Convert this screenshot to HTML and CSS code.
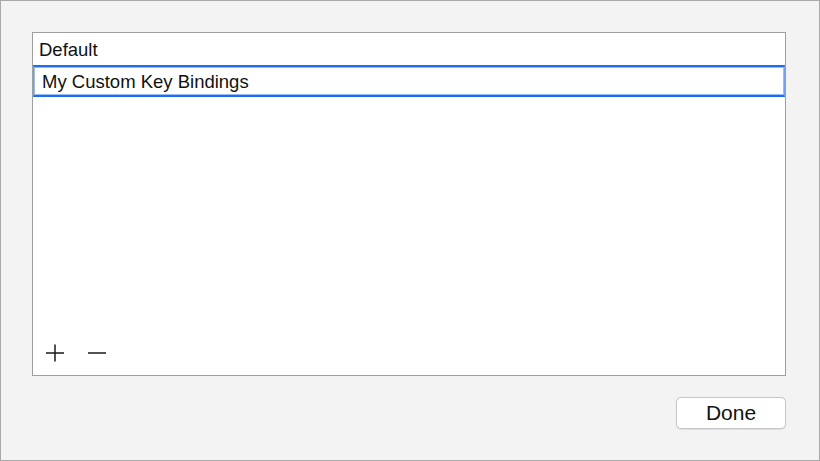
FILE: index.html
```html
<!DOCTYPE html>
<html>
<head>
<meta charset="utf-8">
<link rel="stylesheet" href="styles.css">
</head>
<body>
<div class="window">
  <div class="table">
    <div class="row">Default</div>
    <div class="row editing"><div class="field">My Custom Key Bindings</div></div>
    <div class="spacer"></div>
    <div class="tools">
      <svg class="tool" width="20" height="20" viewBox="0 0 20 20"><path d="M10 1.5V18.5M1 10H19" stroke="#1a1a1a" stroke-width="1.5" fill="none"/></svg>
      <svg class="tool" width="20" height="20" viewBox="0 0 20 20"><path d="M1 10H19" stroke="#1a1a1a" stroke-width="1.5" fill="none"/></svg>
    </div>
  </div>
  <div class="footer">
    <button class="done">Done</button>
  </div>
</div>
</body>
</html>
```
FILE: styles.css
```css
html, body { margin: 0; padding: 0; }
body { width: 820px; height: 461px; overflow: hidden; font-family: "Liberation Sans", Arial, sans-serif; }
.window {
  box-sizing: border-box;
  width: 820px; height: 461px;
  background: #f3f3f3;
  border: 1px solid #a9a9a9;
  padding: 31px 33px 0 31px;
  display: flex; flex-direction: column;
}
.table {
  box-sizing: border-box;
  height: 344px;
  background: #fff;
  border: 1px solid #9e9e9e;
  display: flex; flex-direction: column;
}
.row {
  height: 32px;
  line-height: 33px;
  font-size: 18.5px;
  color: #111;
  padding-left: 6px;
}
.row.editing {
  padding: 0;
  box-sizing: border-box;
  height: 32px;
  border-top: 2px solid #1f6cee;
  border-bottom: 2px solid #1f6cee;
  border-left: 1px solid #6fa3f2;
  border-right: 1px solid #6fa3f2;
}
.field {
  box-sizing: border-box;
  height: 28px;
  line-height: 28px;
  border: 1px solid #98bdf6;
  padding-left: 7px;
  font-size: 18.5px;
  color: #111;
  background: #fff;
}
.spacer { flex: 1; }
.tools {
  display: flex; gap: 22px;
  padding: 0 0 12px 12px;
}
.tool { display: block; }
.footer {
  display: flex; justify-content: flex-end;
  padding-top: 21px;
}
.done {
  box-sizing: border-box;
  width: 110px; height: 32px;
  background: #fff;
  border: 1px solid #c6c6c6;
  border-radius: 5px;
  box-shadow: 0 0.5px 1px rgba(0,0,0,0.08);
  font-family: "Liberation Sans", Arial, sans-serif;
  font-size: 21px;
  color: #111;
  padding: 0;
}
```
